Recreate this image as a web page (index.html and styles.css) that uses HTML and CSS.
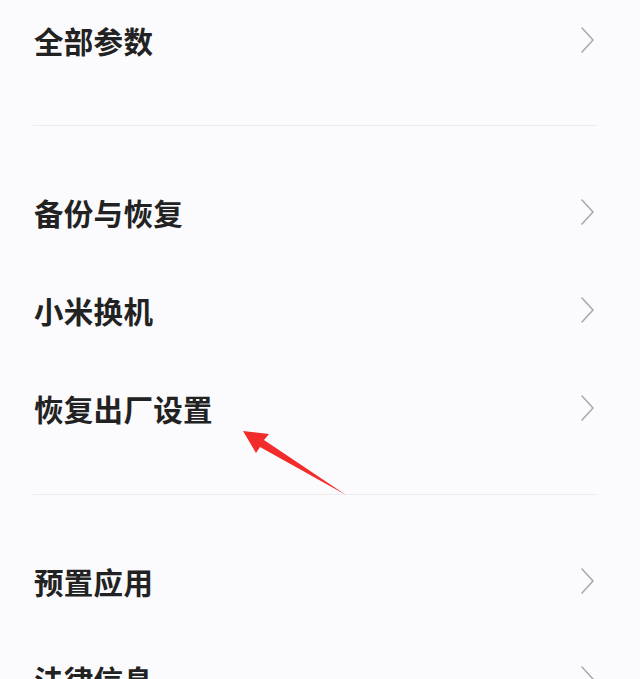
FILE: index.html
```html
<!DOCTYPE html>
<html lang="zh-CN">
<head>
    <meta charset="UTF-8">
    <meta name="viewport" content="width=device-width, initial-scale=1.0">
    <title>我的设备</title>
    <link rel="stylesheet" href="styles.css">
</head>
<body>
    <div class="settings">
        <div class="group first">
            <div class="row"><span class="label">全部参数</span><svg class="chevron" viewBox="0 0 13 26"><polyline points="1,1 12,13 1,25"/></svg></div>
        </div>
        <div class="divider"></div>
        <div class="group">
            <div class="row"><span class="label">备份与恢复</span><svg class="chevron" viewBox="0 0 13 26"><polyline points="1,1 12,13 1,25"/></svg></div>
            <div class="row"><span class="label">小米换机</span><svg class="chevron" viewBox="0 0 13 26"><polyline points="1,1 12,13 1,25"/></svg></div>
            <div class="row"><span class="label">恢复出厂设置</span><svg class="chevron" viewBox="0 0 13 26"><polyline points="1,1 12,13 1,25"/></svg></div>
        </div>
        <div class="divider"></div>
        <div class="group">
            <div class="row"><span class="label">预置应用</span><svg class="chevron" viewBox="0 0 13 26"><polyline points="1,1 12,13 1,25"/></svg></div>
            <div class="row"><span class="label">法律信息</span><svg class="chevron" viewBox="0 0 13 26"><polyline points="1,1 12,13 1,25"/></svg></div>
        </div>
    </div>

    <!-- red annotation arrow pointing at 恢复出厂设置 -->
    <svg class="mark-arrow" width="640" height="679" viewBox="0 0 640 679">
        <polygon points="243,431 269,434 264,440 346,495 260,447 256,453" fill="#f22b2b"/>
    </svg>
</body>
</html>
```

FILE: styles.css
```css
* {
    margin: 0;
    padding: 0;
    box-sizing: border-box;
}

body {
    background: #fbfbfd;
    font-family: "Noto Sans CJK SC", "Noto Sans", sans-serif;
    width: 640px;
    height: 679px;
    overflow: hidden;
    position: relative;
}

.settings {
    margin-top: -9px;
}

.group {
    padding: 37px 0;
}

.group.first {
    padding-top: 0;
    padding-bottom: 36px;
}

.row {
    height: 98px;
    display: flex;
    align-items: center;
    justify-content: space-between;
    padding: 0 46px 0 34px;
}

.label {
    font-size: 29.5px;
    font-weight: 700;
    color: #222;
    letter-spacing: 0.3px;
}

.chevron {
    width: 13px;
    height: 26px;
    fill: none;
    stroke: #aaaaac;
    stroke-width: 1.6;
    stroke-linecap: round;
    stroke-linejoin: round;
}

.divider {
    height: 1px;
    background: #ececee;
    margin: 0 43px 0 33px;
}

.mark-arrow {
    position: absolute;
    top: 0;
    left: 0;
}
```
